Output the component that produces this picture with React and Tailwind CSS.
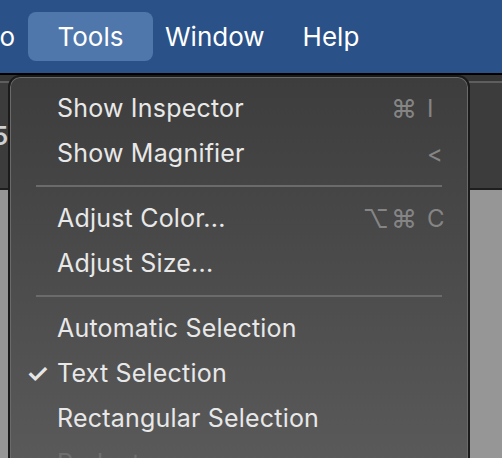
const font = { fontFamily: 'Inter, "Noto Sans", sans-serif' };

const groups = [
  [
    { label: 'Show Inspector', mods: '⌘', key: 'I' },
    { label: 'Show Magnifier', key: '<' },
  ],
  [
    { label: 'Adjust Color...', mods: '⌥⌘', key: 'C' },
    { label: 'Adjust Size...' },
  ],
  [
    { label: 'Automatic Selection' },
    { label: 'Text Selection', checked: true },
    { label: 'Rectangular Selection' },
    { label: 'Redact', disabled: true },
  ],
];

function MenuItem({ item }) {
  return (
    <div className="relative flex h-[45px] items-center pl-[47px] pr-[22px]">
      {item.checked && (
        <span className="absolute left-[16px] text-[26px] font-semibold leading-none text-[#e6e6e6]">✓</span>
      )}
      <span
        className={`flex-1 text-[25px] tracking-[0.2px] ${item.disabled ? 'text-[#6e6e6e]' : 'text-[#e8e8e8]'}`}
      >
        {item.label}
      </span>
      {item.key && (
        <span className="flex items-center text-[24px] text-[#858585]">
          <span className="pr-[8px] text-[26px] tracking-[2px]">{item.mods}</span>
          <span className="w-[19px]">{item.key}</span>
        </span>
      )}
    </div>
  );
}

export default function App() {
  return (
    <div className="relative h-[458px] w-[502px] overflow-hidden bg-[#969696]" style={font}>
      {/* menu bar */}
      <div className="flex h-[73px] items-center bg-[#2b5288] text-[26px] text-white">
        <span className="-ml-[20px] mr-[13px]">Go</span>
        <span className="flex h-[49px] w-[125px] items-center justify-center rounded-[8px] bg-[#5077ab]">Tools</span>
        <span className="ml-[12px]">Window</span>
        <span className="ml-[38px]">Help</span>
      </div>
      <div className="h-[2px] bg-black" />

      {/* window behind */}
      <div className="flex h-[113px] flex-col bg-[#3c3c3c]">
        <div className="h-[8px] border-b-2 border-[#5e5e5e] bg-[#343434]" />
        <div className="flex flex-1 items-center">
          <span className="-ml-[8px] text-[26px] font-semibold text-[#d0d0d0]">5</span>
        </div>
      </div>
      <div className="h-[2px] bg-[#1e1e1e]" />

      {/* dropdown */}
      <div className="absolute left-[8px] top-[75px] h-[420px] w-[462px] rounded-[12px] border-2 border-[#1b1b1b] bg-gradient-to-b from-[#3d3d3d] to-[#5c5c5c] pt-[9px] shadow-[inset_0_0_0_1px_#6a6a6a]">
        {groups.map((group, gi) => (
          <div key={gi}>
            {gi > 0 && <div className="mx-[26px] my-[9px] h-[2px] bg-[#6b6b6b]" />}
            {group.map((item) => (
              <MenuItem key={item.label} item={item} />
            ))}
          </div>
        ))}
      </div>
    </div>
  );
}
